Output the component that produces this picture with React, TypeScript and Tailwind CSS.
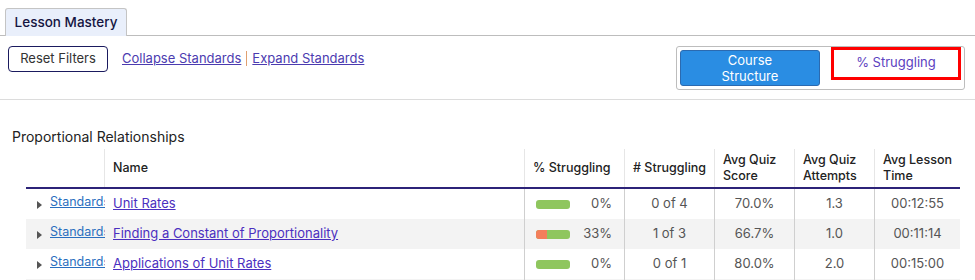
import React from "react";

const rows = [
  { name: "Unit Rates", pct: 0, num: "0 of 4", score: "70.0%", att: "1.3", time: "00:12:55" },
  { name: "Finding a Constant of Proportionality", pct: 33, num: "1 of 3", score: "66.7%", att: "1.0", time: "00:11:14" },
  { name: "Applications of Unit Rates", pct: 0, num: "0 of 1", score: "80.0%", att: "2.0", time: "00:15:00" },
  { name: "", pct: -1, num: "", score: "", att: "", time: "" },
];

export default function App() {
  return (
    <div className="w-[975px] h-[280px] overflow-hidden bg-white text-[13px] text-[#333]" style={{ fontFamily: "Inter, 'Noto Sans', sans-serif" }}>
      <div className="pt-2 pl-[5px] border-b border-[#bdbdbd] flex">
        <div className="h-[28px] w-[122px] bg-[#e9effb] border border-[#c4c4c4] border-b-0 rounded-t-[3px] flex items-center justify-center text-[13.5px] font-medium text-[#141441] -mb-px">
          Lesson Mastery
        </div>
      </div>
      <div className="h-[64px] border-b border-[#dcdcdc] flex items-start justify-between pl-2 pr-[10px] pt-[10px]">
        <div className="flex items-start">
          <button className="h-[26px] w-[100px] border border-[#1a1a5e] rounded-[4px] text-[13px] text-[#333] flex items-center justify-center">
            Reset Filters
          </button>
          <div className="ml-[14px] mt-[3px] flex items-center text-[13px]">
            <a className="underline text-[#4b3bb0]">Collapse Standards</a>
            <span className="mx-[5px] w-px h-[15px] bg-[#e0a070]" />
            <a className="underline text-[#4b3bb0]">Expand Standards</a>
          </div>
        </div>
        <div className="w-[289px] h-[44px] border border-[#bdbdbd] rounded-[3px] flex items-start p-[3px] mr-0">
          <div className="w-[142px] h-[36px] bg-[#2a8de3] border border-[#2b6ab0] rounded-[3px] text-white text-[13px] leading-[16px] flex items-center justify-center text-center">
            Course<br />Structure
          </div>
          <div className="ml-[11px] -mt-[3px] w-[132px] h-[33px] border-[3px] border-[#ff0000] flex items-start justify-center pt-[3px] text-[13px] text-[#5b3fc0]">
            % Struggling
          </div>
        </div>
      </div>
      <div className="pt-[28px] pl-3 text-[14px] text-[#222] leading-[18px]">Proportional Relationships</div>
      <div className="ml-[26px] mt-[3px] w-[934px]">
        <div className="flex h-[40px] border-b-2 border-[#2c2378] text-[12.5px] text-[#222] font-medium leading-[16px] whitespace-nowrap">
          <div className="w-[79px] border-r border-[#e6e6e6]" />
          <div className="w-[420px] border-r border-[#e6e6e6] flex items-center px-2">Name</div>
          <div className="w-[100px] border-r border-[#e6e6e6] flex items-center px-2">% Struggling</div>
          <div className="w-[90px] border-r border-[#e6e6e6] flex items-center px-2"># Struggling</div>
          <div className="w-[80px] border-r border-[#e6e6e6] flex items-center px-2">Avg Quiz<br />Score</div>
          <div className="w-[80px] border-r border-[#e6e6e6] flex items-center px-2">Avg Quiz<br />Attempts</div>
          <div className="w-[85px] flex items-center px-2">Avg Lesson<br />Time</div>
        </div>
        {rows.map((r, i) => (
          <div key={i} className={`flex h-[30px] text-[13px] ${i % 2 === 1 ? "bg-[#f3f3f3]" : "bg-white"}`}>
            <div className="w-[79px] flex items-center pl-[11px] overflow-hidden whitespace-nowrap">
              {r.pct >= 0 && (
                <>
                  <svg width="5" height="8" viewBox="0 0 5 8" className="shrink-0 mt-[2px]">
                    <path d="M0 0 L5 4 L0 8 Z" fill="#555" />
                  </svg>
                  <a className="ml-[8px] underline text-[#2a6fbf] text-[12.5px] -mt-[3px]">Standards</a>
                </>
              )}
            </div>
            <div className="w-[420px] border-r border-[#cfcfcf] flex items-center px-2">
              <a className="underline text-[#4b2fc0] text-[13px]">{r.name}</a>
            </div>
            <div className="w-[100px] border-r border-[#cfcfcf] flex items-center pl-[11px] pr-[12px] justify-between">
              {r.pct >= 0 && (
                <>
                  <div className="w-[34px] h-[9px] rounded-[3px] bg-[#8fc65e] overflow-hidden flex">
                    <div className="h-full bg-[#f37f5b]" style={{ width: `${r.pct * 0.34}px` }} />
                  </div>
                  <span className="text-[#555]">{r.pct}%</span>
                </>
              )}
            </div>
            <div className="w-[90px] border-r border-[#cfcfcf] flex items-center justify-center text-[#555]">{r.num}</div>
            <div className="w-[80px] border-r border-[#cfcfcf] flex items-center justify-center text-[#555]">{r.score}</div>
            <div className="w-[80px] border-r border-[#cfcfcf] flex items-center justify-center text-[#555]">{r.att}</div>
            <div className="w-[85px] flex items-center justify-center text-[#555]">{r.time}</div>
          </div>
        ))}
      </div>
    </div>
  );
}
